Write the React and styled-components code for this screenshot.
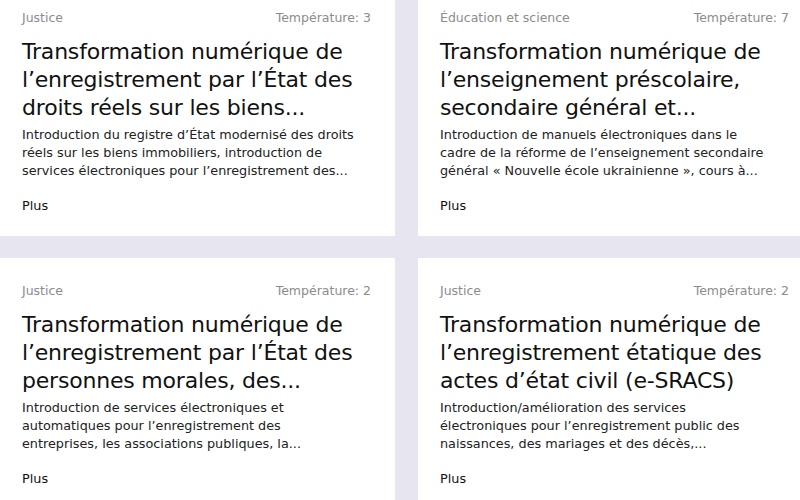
import React from 'react';
import styled, { createGlobalStyle } from 'styled-components';

const GlobalStyle = createGlobalStyle`
  html, body {
    margin: 0;
    padding: 0;
    overflow: hidden;
    background: #e7e5f0;
  }
  body {
    font-family: "DejaVu Sans", "Noto Sans", sans-serif;
  }
`;

// grid is wider than the window, the right column is cut off
const Grid = styled.div`
  display: grid;
  grid-template-columns: 395px 395px;
  column-gap: 23px;
  row-gap: 22px;
  margin-top: -15px;
  width: 813px;
`;

const Card = styled.article`
  background: #fff;
  padding: 25px 22px 22px;
  display: flex;
  flex-direction: column;
`;

const Meta = styled.div`
  display: flex;
  justify-content: space-between;
  font-size: 12.5px;
  line-height: 16px;
  color: #8c8c8c;
  padding-right: 2px;
`;

const Title = styled.h3`
  margin: 12px 0 0;
  font-size: 22px;
  line-height: 28px;
  font-weight: 500;
  color: #111;
  letter-spacing: -0.2px;
`;

const Desc = styled.p`
  margin: 4px 0 0;
  font-size: 12.8px;
  line-height: 18px;
  color: #222;
`;

const More = styled.a`
  margin-top: 18px;
  font-size: 12.8px;
  line-height: 16px;
  color: #111;
  text-decoration: none;
  cursor: pointer;
`;

const projects = [
  {
    category: 'Justice',
    temp: 3,
    title: ['Transformation numérique de', 'l’enregistrement par l’État des', 'droits réels sur les biens...'],
    desc: ['Introduction du registre d’État modernisé des droits', 'réels sur les biens immobiliers, introduction de', 'services électroniques pour l’enregistrement des...'],
  },
  {
    category: 'Éducation et science',
    temp: 7,
    title: ['Transformation numérique de', 'l’enseignement préscolaire,', 'secondaire général et...'],
    desc: ['Introduction de manuels électroniques dans le', 'cadre de la réforme de l’enseignement secondaire', 'général « Nouvelle école ukrainienne », cours à...'],
  },
  {
    category: 'Justice',
    temp: 2,
    title: ['Transformation numérique de', 'l’enregistrement par l’État des', 'personnes morales, des...'],
    desc: ['Introduction de services électroniques et', 'automatiques pour l’enregistrement des', 'entreprises, les associations publiques, la...'],
  },
  {
    category: 'Justice',
    temp: 2,
    title: ['Transformation numérique de', 'l’enregistrement étatique des', 'actes d’état civil (e-SRACS)'],
    desc: ['Introduction/amélioration des services', 'électroniques pour l’enregistrement public des', 'naissances, des mariages et des décès,...'],
  },
];

const lines = (arr) =>
  arr.map((l, i) => (
    <React.Fragment key={i}>
      {l}
      {i < arr.length - 1 && <br />}
    </React.Fragment>
  ));

const App = () => {
  return (
    <>
      <GlobalStyle />
      <Grid>
        {projects.map((p, i) => (
          <Card key={i}>
            <Meta>
              <span>{p.category}</span>
              <span>Température: {p.temp}</span>
            </Meta>
            <Title>{lines(p.title)}</Title>
            <Desc>{lines(p.desc)}</Desc>
            <More href="#">Plus</More>
          </Card>
        ))}
      </Grid>
    </>
  );
};

export default App;
